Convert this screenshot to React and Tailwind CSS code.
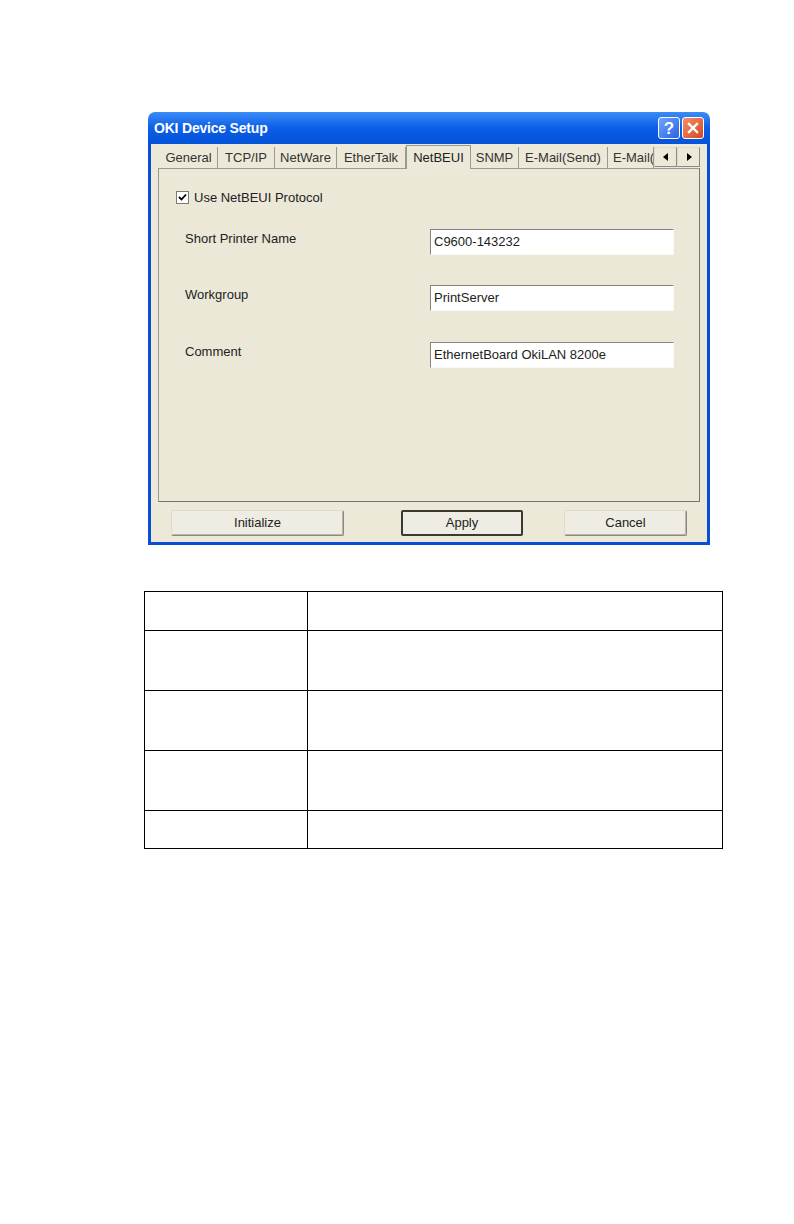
import React from 'react';

const font = { fontFamily: '"Liberation Sans", Arial, sans-serif' };

const tabs = [
  { label: 'General', w: 58 },
  { label: 'TCP/IP', w: 57 },
  { label: 'NetWare', w: 62 },
  { label: 'EtherTalk', w: 69 },
  { label: 'NetBEUI', w: 65, active: true },
  { label: 'SNMP', w: 48 },
  { label: 'E-Mail(Send)', w: 89 },
  { label: 'E-Mail(Recv)', w: 46, clip: true },
];

const fields = [
  { label: 'Short Printer Name', value: 'C9600-143232', mt: 'mt-[21px]' },
  { label: 'Workgroup', value: 'PrintServer', mt: 'mt-[30px]' },
  { label: 'Comment', value: 'EthernetBoard OkiLAN 8200e', mt: 'mt-[31px]' },
];

const Tab = ({ label, w, active, clip }) => (
  <div
    style={{ width: w }}
    className={
      active
        ? 'relative z-10 -mb-px flex h-[24px] items-start justify-center overflow-hidden whitespace-nowrap border border-b-0 border-[#919b9c] bg-[#ece9d8] pt-[2px] text-[13px] text-[#222]'
        : 'flex h-[21px] items-center overflow-hidden whitespace-nowrap border-r border-[#9a9a8e] bg-[#ece9d8] text-[13px] text-[#333] ' +
          (clip ? 'justify-start pl-[5px]' : 'justify-center')
    }
  >
    {label}
  </div>
);

const XpButton = ({ children, w, isDefault }) => (
  <div
    style={{ width: w }}
    className={
      'flex h-[26px] items-center justify-center rounded-[2px] bg-[#efede3] text-[13px] text-[#222] ' +
      (isDefault
        ? 'border-2 border-[#3a3a32]'
        : 'border border-[#dedbcc] border-r-[#8c8a7e] border-b-[#8c8a7e] shadow-[inset_-1px_-1px_0_#b9b6a6]')
    }
  >
    {children}
  </div>
);

const TitleButton = ({ kind }) => (
  <div
    className={
      'flex h-[22px] w-[22px] items-center justify-center rounded-[3px] border border-white ' +
      (kind === 'help'
        ? 'bg-gradient-to-br from-[#6fa5ff] to-[#2b62e0]'
        : 'bg-gradient-to-br from-[#f0906a] to-[#d5451e]')
    }
  >
    {kind === 'help' ? (
      <span className="text-[17px] font-bold leading-none text-white">?</span>
    ) : (
      <svg width="12" height="12" viewBox="0 0 12 12">
        <path d="M2 2 L10 10 M10 2 L2 10" stroke="white" strokeWidth="2.4" strokeLinecap="square" />
      </svg>
    )}
  </div>
);

const ScrollArrow = ({ dir }) => (
  <div className="flex h-[20px] w-[23px] items-center justify-center border border-[#dedbcc] border-r-[#8c8a7e] border-b-[#8c8a7e] bg-[#ece9d8]">
    <svg width="8" height="10" viewBox="0 0 8 10">
      {dir === 'left' ? <path d="M6 1 L1 5 L6 9 Z" fill="black" /> : <path d="M2 1 L7 5 L2 9 Z" fill="black" />}
    </svg>
  </div>
);

const App = () => {
  const rows = [38, 60, 60, 60, 38];
  return (
    <div className="min-h-[1224px] w-[794px] bg-white pt-[112px]" style={font}>
      {/* Dialog window */}
      <div className="ml-[148px] w-[562px]">
        <div className="flex h-[32px] items-center justify-between rounded-t-[7px] bg-gradient-to-b from-[#3a8cf6] via-[#0a5ee8] to-[#0553d8] pl-[6px] pr-[6px]">
          <span className="text-[14px] font-bold tracking-[-0.2px] text-white">OKI Device Setup</span>
          <div className="flex gap-[2px]">
            <TitleButton kind="help" />
            <TitleButton kind="close" />
          </div>
        </div>
        <div className="border-x-[3px] border-b-[3px] border-[#0a4ed6] bg-[#ece9d8] pb-[6px]">
          {/* Tabs */}
          <div className="ml-[7px] mr-[7px] flex h-[24px] items-end pl-[2px] pt-[2px]">
            {tabs.map((t) => (
              <Tab key={t.label} {...t} />
            ))}
            <div className="mb-[1px] flex">
              <ScrollArrow dir="left" />
              <ScrollArrow dir="right" />
            </div>
          </div>
          {/* Panel */}
          <div className="mx-[7px] h-[334px] border border-[#919b9c] border-b-[#77756a] border-r-[#77756a] bg-[#ebe8d7] pl-[17px]">
            <div className="mt-[19px] flex items-center gap-[5px]">
              <div className="flex h-[13px] w-[13px] items-center justify-center border border-[#7a7a7a] bg-white">
                <svg width="9" height="9" viewBox="0 0 9 9">
                  <path d="M1 4 L3.5 6.5 L8 1.5" stroke="black" strokeWidth="1.8" fill="none" />
                </svg>
              </div>
              <span className="text-[13px] text-[#222]">Use NetBEUI Protocol</span>
            </div>
            {fields.map((f) => (
              <div key={f.label} className={'flex items-start ' + f.mt}>
                <span className="w-[254px] pl-[9px] text-[13px] text-[#222]">{f.label}</span>
                <div className="flex h-[26px] w-[244px] items-center border border-[#f8f8f4] border-l-[#86857c] border-t-[#86857c] bg-white pl-[3px] text-[13px] text-[#222]">
                  {f.value}
                </div>
              </div>
            ))}
          </div>
          {/* Buttons */}
          <div className="mt-[8px] flex items-center pl-[20px]">
            <XpButton w={173}>Initialize</XpButton>
            <div className="ml-[57px]">
              <XpButton w={122} isDefault>
                Apply
              </XpButton>
            </div>
            <div className="ml-[41px]">
              <XpButton w={123}>Cancel</XpButton>
            </div>
          </div>
        </div>
      </div>

      {/* Table */}
      <div className="ml-[144px] mt-[46px] w-[579px] border border-black">
        {rows.map((h, i) => (
          <div
            key={i}
            style={{ height: h }}
            className={'grid grid-cols-[163px_1fr] ' + (i > 0 ? 'border-t border-black' : '')}
          >
            <div className="border-r border-black" />
            <div />
          </div>
        ))}
      </div>
    </div>
  );
};

export default App;
